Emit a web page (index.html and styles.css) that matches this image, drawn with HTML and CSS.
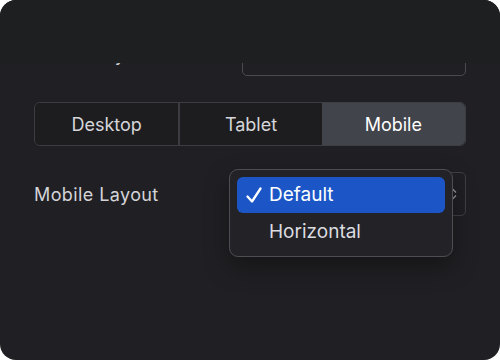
FILE: index.html
```html
<!DOCTYPE html>
<html lang="en">
<head>
    <meta charset="UTF-8">
    <meta name="viewport" content="width=device-width, initial-scale=1.0">
    <title>Layout Settings</title>
    <link rel="stylesheet" href="styles.css">
</head>
<body>
    <div class="panel">
        <!-- header bar sits over the scrolled content -->
        <div class="panel-header"></div>

        <div class="panel-body">
            <div class="row">
                <span class="label label-top">Tablet Layout</span>
                <div class="field"></div>
            </div>

            <div class="segmented">
                <div class="segment">Desktop</div>
                <div class="segment">Tablet</div>
                <div class="segment active">Mobile</div>
            </div>

            <div class="row">
                <span class="label">Mobile Layout</span>
                <div class="select">
                    <svg class="select-arrows" width="8" height="12" viewBox="0 0 8 12">
                        <path d="M1 4.5 L4 1.5 L7 4.5 M1 7.5 L4 10.5 L7 7.5" fill="none" stroke="#9a9ba0" stroke-width="1.3"/>
                    </svg>

                    <!-- Open dropdown menu -->
                    <div class="menu">
                        <div class="menu-item selected">
                            <svg class="check" width="16" height="16" viewBox="0 0 16 16">
                                <path d="M1.5 9.5 L6 14.5 L14.5 1.5" fill="none" stroke="#fff" stroke-width="2.3" stroke-linecap="round" stroke-linejoin="round"/>
                            </svg>
                            <span>Default</span>
                        </div>
                        <div class="menu-item">
                            <span>Horizontal</span>
                        </div>
                    </div>
                </div>
            </div>
        </div>
    </div>
</body>
</html>
```

FILE: styles.css
```css
/* Page */
body {
    margin: 0;
    background: #ffffff;
    font-family: Inter, "Noto Sans", sans-serif;
}

/* Settings panel */
.panel {
    position: relative;
    width: 500px;
    height: 360px;
    border-radius: 16px;
    background: #202024;
    overflow: hidden;
}

.panel-header {
    position: absolute;
    top: 0;
    left: 0;
    right: 0;
    height: 63px;
    background: #1e1f21;
    z-index: 5;
}

.panel-body {
    padding: 40px 34px 0;
    display: flex;
    flex-direction: column;
    gap: 26px;
}

/* Label + control rows */
.row {
    display: flex;
    justify-content: space-between;
    align-items: center;
}

.label {
    font-size: 18px;
    color: #d4d4d8;
    letter-spacing: 0.4px;
}

/* only the descender peeks out under the header */
.label-top {
    margin-bottom: 8px;
}

.field {
    width: 224px;
    height: 36px;
    box-sizing: border-box;
    border: 1px solid #4a4b50;
    border-radius: 5px;
}

/* Device switcher */
.segmented {
    display: grid;
    grid-template-columns: repeat(3, 1fr);
    height: 44px;
    border: 1px solid #3c3d42;
    border-radius: 6px;
    overflow: hidden;
    box-sizing: border-box;
}

.segment {
    display: flex;
    justify-content: center;
    align-items: center;
    font-size: 18px;
    color: #d6d6da;
    background: #1d1d20;
}

.segment + .segment {
    border-left: 2px solid #3c3d42;
}

.segment.active {
    background: #42444b;
    color: #ffffff;
    border-left: none;
}

/* Select with its open menu */
.select {
    position: relative;
    width: 224px;
    height: 44px;
    box-sizing: border-box;
    border: 1px solid #3f4045;
    border-radius: 5px;
    display: flex;
    justify-content: flex-end;
    align-items: center;
    padding-right: 8px;
}

.menu {
    position: absolute;
    left: -14px;
    top: -4px;
    width: 224px;
    height: 88px;
    box-sizing: border-box;
    padding: 7px;
    background: #232327;
    border: 1px solid #4d4e53;
    border-radius: 9px;
    box-shadow: 0 10px 24px rgba(0, 0, 0, 0.35);
    display: flex;
    flex-direction: column;
    gap: 1px;
}

.menu-item {
    position: relative;
    height: 36px;
    display: flex;
    align-items: center;
    padding-left: 32px;
    font-size: 19px;
    color: #dcdce0;
    border-radius: 6px;
}

.menu-item.selected {
    background: #1c56c6;
    color: #ffffff;
}

.check {
    position: absolute;
    left: 9px;
    top: 10px;
}
```
